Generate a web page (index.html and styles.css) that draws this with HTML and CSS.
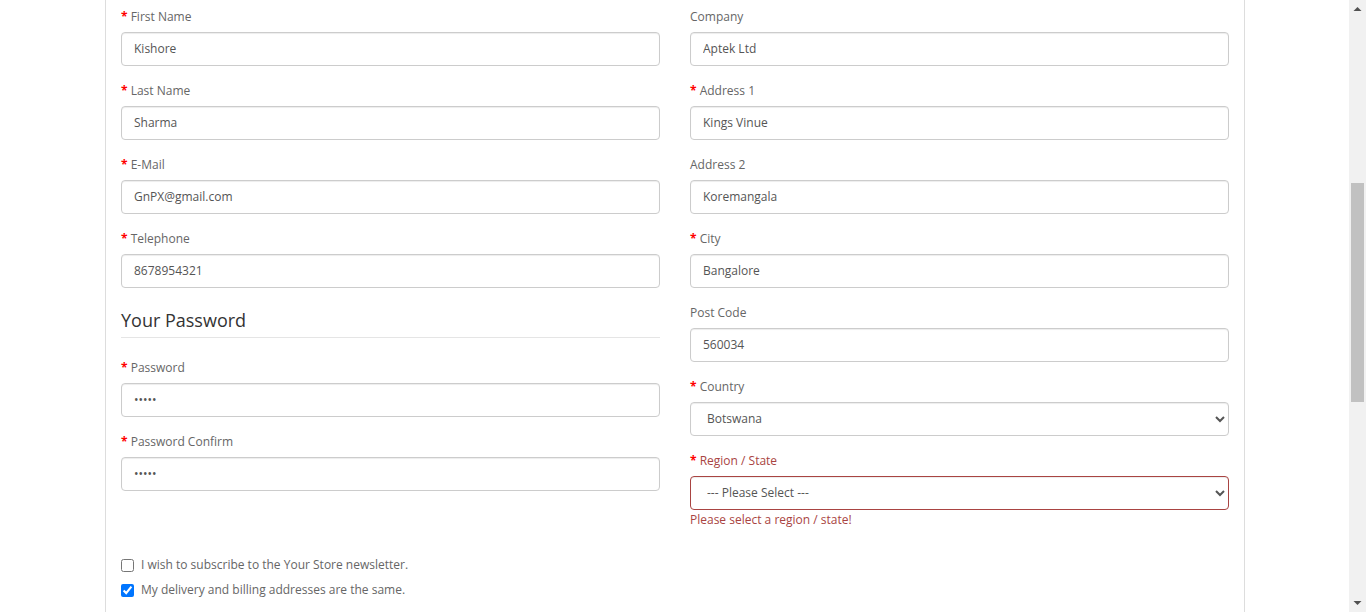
FILE: index.html
```html
<!DOCTYPE html>
<html lang="en">
<head>
<meta charset="utf-8">
<title>Checkout</title>
<link rel="stylesheet" href="styles.css">
</head>
<body>
<div class="page">
  <main class="viewport">
    <div class="panel">
      <div class="cols">
        <div class="col">
          <div class="group required">
            <label class="control-label">First Name</label>
            <input class="control" type="text" value="Kishore">
          </div>
          <div class="group required">
            <label class="control-label">Last Name</label>
            <input class="control" type="text" value="Sharma">
          </div>
          <div class="group required">
            <label class="control-label">E-Mail</label>
            <input class="control" type="text" value="GnPX@gmail.com">
          </div>
          <div class="group required">
            <label class="control-label">Telephone</label>
            <input class="control" type="text" value="8678954321">
          </div>
          <div class="legend">Your Password</div>
          <div class="group required">
            <label class="control-label">Password</label>
            <input class="control" type="password" value="12345">
          </div>
          <div class="group required">
            <label class="control-label">Password Confirm</label>
            <input class="control" type="password" value="12345">
          </div>
        </div>
        <div class="col">
          <div class="group">
            <label class="control-label">Company</label>
            <input class="control" type="text" value="Aptek Ltd">
          </div>
          <div class="group required">
            <label class="control-label">Address 1</label>
            <input class="control" type="text" value="Kings Vinue">
          </div>
          <div class="group">
            <label class="control-label">Address 2</label>
            <input class="control" type="text" value="Koremangala">
          </div>
          <div class="group required">
            <label class="control-label">City</label>
            <input class="control" type="text" value="Bangalore">
          </div>
          <div class="group">
            <label class="control-label">Post Code</label>
            <input class="control" type="text" value="560034">
          </div>
          <div class="group required">
            <label class="control-label">Country</label>
            <select class="control">
              <option>Botswana</option>
            </select>
          </div>
          <div class="group required has-error">
            <label class="control-label">Region / State</label>
            <select class="control">
              <option>--- Please Select ---</option>
            </select>
            <div class="text-danger">Please select a region / state!</div>
          </div>
        </div>
      </div>
      <div class="checkbox">
        <label><input type="checkbox">I wish to subscribe to the Your Store newsletter.</label>
      </div>
      <div class="checkbox">
        <label><input type="checkbox" checked>My delivery and billing addresses are the same.</label>
      </div>
    </div>
  </main>
  <div class="scrollbar">
    <div class="sb-btn"><svg width="17" height="17" viewBox="0 0 17 17"><path d="M4.5 11 L8.5 7 L12.5 11 Z" fill="#505050"/></svg></div>
    <div class="sb-track"><div class="sb-thumb"></div></div>
    <div class="sb-btn"><svg width="17" height="17" viewBox="0 0 17 17"><path d="M4.5 6 L8.5 10 L12.5 6 Z" fill="#505050"/></svg></div>
  </div>
</div>
</body>
</html>
```

FILE: styles.css
```css
* { box-sizing: border-box; }
html, body { margin: 0; padding: 0; height: 612px; overflow: hidden; }
body {
  font-family: "Open Sans", "Liberation Sans", sans-serif;
  font-size: 12px;
  line-height: 20px;
  color: #666;
  background: #fff;
}
.page { display: flex; height: 612px; }
.viewport { flex: 1; height: 612px; overflow: hidden; padding-left: 105px; }
.panel {
  width: 1140px;
  min-height: 612px;
  border-left: 1px solid #ddd;
  border-right: 1px solid #ddd;
  padding: 7px 15px 0 15px;
}
.cols { display: grid; grid-template-columns: 539px 539px; column-gap: 30px; }
.group { margin-bottom: 15px; }
.control-label { display: block; margin-bottom: 5px; height: 20px; }
.required .control-label::before { content: "* "; color: #f00; font-weight: bold; }
.control {
  display: block;
  width: 100%;
  height: 34px;
  padding: 5px 12px 7px 12px;
  font-family: "Open Sans", "Liberation Sans", sans-serif;
  font-size: 12px;
  line-height: 20px;
  color: #555;
  background-color: #fff;
  border: 1px solid #ccc;
  border-radius: 4px;
  box-shadow: inset 0 1px 1px rgba(0,0,0,.075);
  margin: 0;
  outline: none;
}
.has-error .control-label { color: #a94442; }
.has-error .control { border-color: #a94442; }
.text-danger { color: #a94442; height: 20px; }
.legend {
  font-size: 18px;
  line-height: 20px;
  color: #333;
  padding: 7px 0;
  border-bottom: 1px solid #e5e5e5;
  margin-bottom: 20px;
}
.checkbox { margin-top: 10px; margin-bottom: 10px; min-height: 20px; }
.checkbox + .checkbox { margin-top: -5px; }
.checkbox label { display: block; position: relative; padding-left: 20px; min-height: 20px; cursor: pointer; }
.checkbox input {
  position: absolute;
  left: 0;
  top: 0;
  margin: 4px 0 0 0;
  width: 13px;
  height: 13px;
}
.scrollbar { width: 17px; height: 612px; background: #f1f1f1; display: flex; flex-direction: column; }
.sb-btn { height: 17px; flex: none; }
.sb-btn svg { display: block; }
.sb-track { flex: 1; padding: 166px 2px 0 2px; }
.sb-thumb { height: 219px; background: #c1c1c1; }
```
